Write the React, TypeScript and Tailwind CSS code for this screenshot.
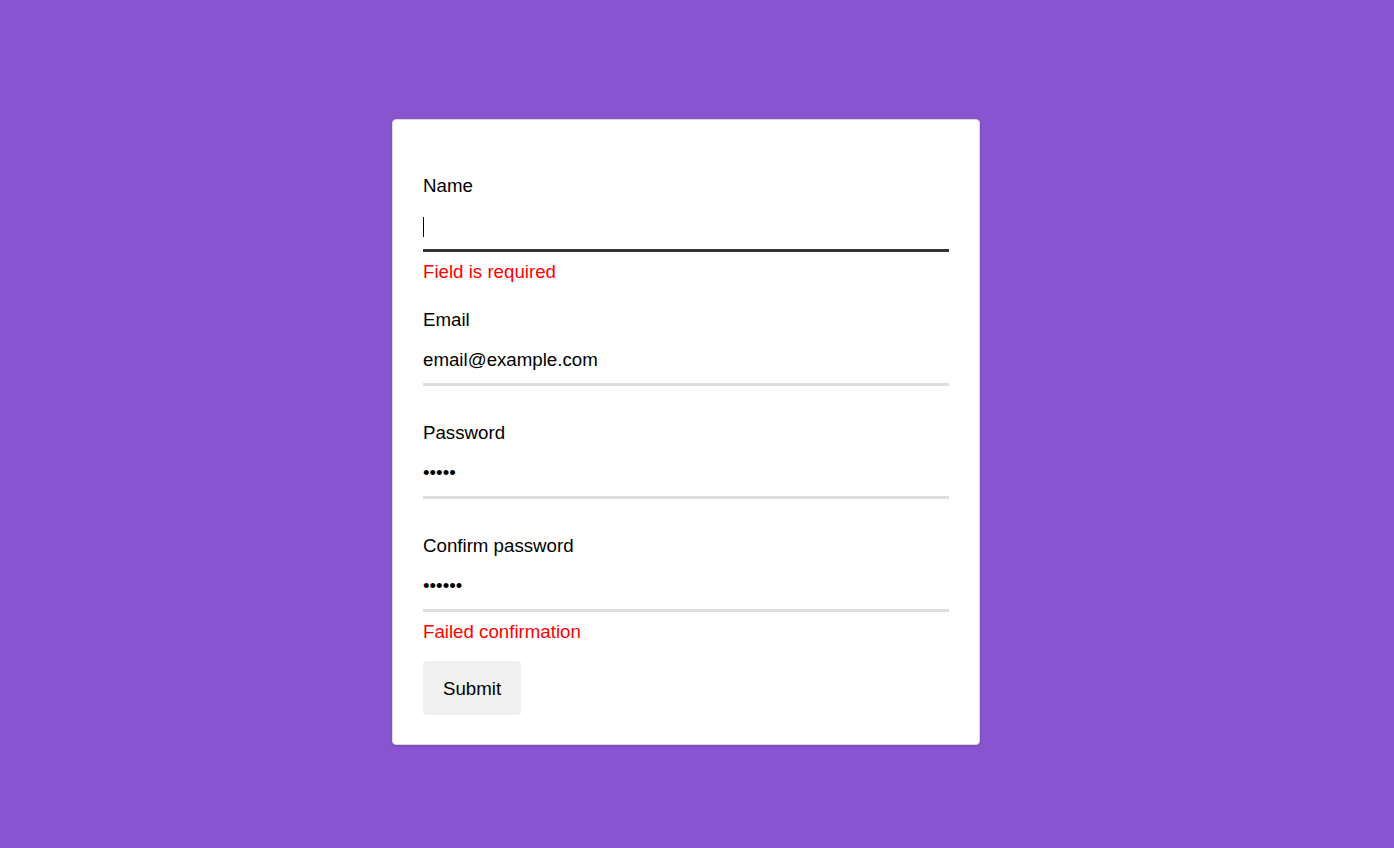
import React, { useState } from 'react';

interface FieldProps {
  label: string;
  type: string;
  value: string;
  error?: string;
  focused?: boolean;
  last?: boolean;
  onChange: (v: string) => void;
}

const Field: React.FC<FieldProps> = ({ label, type, value, error, focused, last, onChange }) => (
  <div className={last ? 'mb-[10px]' : 'mb-[27px]'}>
    <label className="block leading-[21px]">{label}</label>
    <div className="relative">
      <input
        type={type}
        value={value}
        autoFocus={focused}
        onChange={(e) => onChange(e.target.value)}
        className={`block w-full bg-transparent pt-[19px] pb-[13px] leading-[21px] outline-none caret-black border-b-[3px] ${
          focused ? 'border-[#333333]' : 'border-[#dddddd]'
        }`}
      />
      {/* caret of the focused empty field */}
      {focused && value === '' && (
        <span className="absolute left-0 top-[21px] w-px h-[20px] bg-black pointer-events-none" />
      )}
    </div>
    <div className="pt-[9px]">
      {error && <p className="leading-[21px] text-[#ff0000]">{error}</p>}
    </div>
  </div>
);

const App: React.FC = () => {
  const [name, setName] = useState('');
  const [email, setEmail] = useState('email@example.com');
  const [password, setPassword] = useState('12345');
  const [confirm, setConfirm] = useState('123456');

  return (
    <div className="min-h-screen bg-[#8854d0] flex justify-center pt-[119px] pr-[22px] font-['Liberation_Sans',Arial,sans-serif] text-[18.7px] text-black">
      <div className="w-[588px] h-[626px] bg-white rounded-[4px] border border-[#d9d9d9] shadow-[0_1px_3px_rgba(0,0,0,0.15)] px-[30px] pt-[55px] pb-[28px]">
        <form onSubmit={(e) => e.preventDefault()}>
          <Field label="Name" type="text" value={name} onChange={setName} error="Field is required" focused />
          <Field label="Email" type="email" value={email} onChange={setEmail} />
          <Field label="Password" type="password" value={password} onChange={setPassword} />
          <Field
            label="Confirm password"
            type="password"
            value={confirm}
            onChange={setConfirm}
            error="Failed confirmation"
            last
          />
          <button
            type="submit"
            className="mt-[9px] h-[54px] px-[20px] bg-[#f0f0f0] rounded-[3px] leading-[21px]"
          >
            Submit
          </button>
        </form>
      </div>
    </div>
  );
};

export default App;
